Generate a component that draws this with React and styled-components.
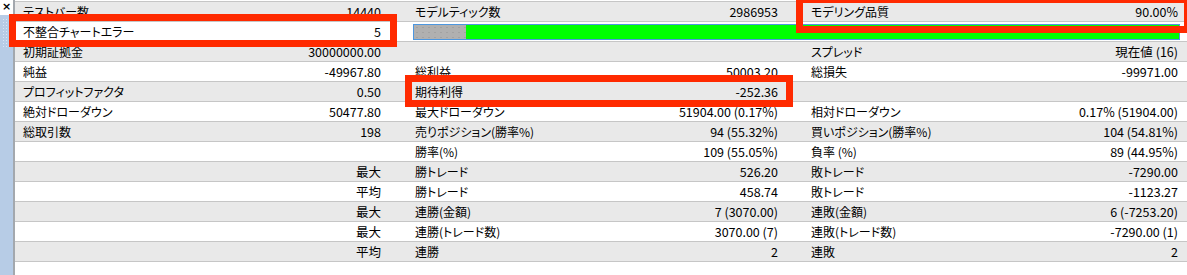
import React from 'react';
import styled, { createGlobalStyle } from 'styled-components';

const GlobalStyle = createGlobalStyle`
  html, body {
    margin: 0;
    padding: 0;
    background: #ffffff;
  }
  body {
    font-family: "Noto Sans CJK JP", "Noto Sans", sans-serif;
    font-size: 12px;
    color: #000;
  }
`;

const Page = styled.div`
  display: flex;
  height: 275px;
  width: 1187px;
  position: relative;
  overflow: hidden;
`;

const Sidebar = styled.div`
  width: 13px;
  border-right: 2px solid #a3a8ae;
  display: flex;
  flex-direction: column;
  background: #b7cce6;
`;

const CloseBox = styled.div`
  height: 15px;
  background: #ffffff;
  font-family: "DejaVu Sans", sans-serif;
  font-weight: bold;
  font-size: 11px;
  line-height: 13px;
  text-align: center;
`;

const Gripper = styled.div`
  margin: 3px 0 0 2px;
  width: 5px;
  height: 30px;
  background-image: radial-gradient(circle, #dbe6f4 0.8px, transparent 1px);
  background-size: 3px 3px;
`;

const Table = styled.div`
  flex: 1;
  margin-top: 1px;
  border-top: 1px solid #c6c6c6;
`;

const Row = styled.div`
  display: grid;
  grid-template-columns: 384px 396px 1fr;
  height: 20px;
  box-sizing: border-box;
  border-bottom: 1px solid #c6c6c6;
  background: ${({ $alt }) => ($alt ? '#e9e9e9' : '#ffffff')};
`;

const pads = [
  { l: 8, r: 18 },
  { l: 16, r: 17 },
  { l: 16, r: 9 },
];

const Cell = styled.div`
  display: flex;
  align-items: center;
  justify-content: space-between;
  padding: 0 ${({ $col }) => pads[$col].r}px 0 ${({ $col }) => pads[$col].l}px;
  white-space: nowrap;
  line-height: 19px;
  font-feature-settings: "palt";
`;

const Value = styled.span`
  font-size: 12.5px;
`;

const ProgressCell = styled.div`
  grid-column: span 2;
  display: flex;
  align-items: center;
  padding: 0 7px 0 14px;
`;

const Progress = styled.div`
  flex: 1;
  height: 16px;
  margin-top: 1px;
  box-sizing: border-box;
  border: 1px solid #4d97e0;
  display: flex;
  background: #00ff00;
`;

const ProgressRest = styled.div`
  width: 52px;
  background-color: #b0b0b0;
  background-image: radial-gradient(circle, #a2a2a2 0.5px, transparent 0.7px);
  background-size: 6px 5px;
`;

const Mark = styled.div`
  position: absolute;
  border: 7px solid #ff2a00;
  box-sizing: border-box;
  left: ${({ $x }) => $x}px;
  top: ${({ $y }) => $y}px;
  width: ${({ $w }) => $w}px;
  height: ${({ $h }) => $h}px;
  pointer-events: none;
`;

const rows = [
  [['テストバー数', '14440'], ['モデルティック数', '2986953'], ['モデリング品質', '90.00%']],
  'progress',
  [['初期証拠金', '30000000.00'], ['', ''], ['スプレッド', '現在値 (16)']],
  [['純益', '-49967.80'], ['総利益', '50003.20'], ['総損失', '-99971.00']],
  [['プロフィットファクタ', '0.50'], ['期待利得', '-252.36'], ['', '']],
  [['絶対ドローダウン', '50477.80'], ['最大ドローダウン', '51904.00 (0.17%)'], ['相対ドローダウン', '0.17% (51904.00)']],
  [['総取引数', '198'], ['売りポジション(勝率%)', '94 (55.32%)'], ['買いポジション(勝率%)', '104 (54.81%)']],
  [['', ''], ['勝率(%)', '109 (55.05%)'], ['負率 (%)', '89 (44.95%)']],
  [['', '最大'], ['勝トレード', '526.20'], ['敗トレード', '-7290.00']],
  [['', '平均'], ['勝トレード', '458.74'], ['敗トレード', '-1123.27']],
  [['', '最大'], ['連勝(金額)', '7 (3070.00)'], ['連敗(金額)', '6 (-7253.20)']],
  [['', '最大'], ['連勝(トレード数)', '3070.00 (7)'], ['連敗(トレード数)', '-7290.00 (1)']],
  [['', '平均'], ['連勝', '2'], ['連敗', '2']],
];

export default function App() {
  return (
    <>
      <GlobalStyle />
      <Page>
        <Sidebar>
          <CloseBox>×</CloseBox>
          <Gripper />
        </Sidebar>
        <Table>
          {rows.map((row, i) =>
            row === 'progress' ? (
              <Row key={i} $alt={i % 2 === 0}>
                <Cell $col={0}>
                  <span>不整合チャートエラー</span>
                  <Value>5</Value>
                </Cell>
                <ProgressCell>
                  <Progress>
                    <ProgressRest />
                  </Progress>
                </ProgressCell>
              </Row>
            ) : (
              <Row key={i} $alt={i % 2 === 0}>
                {row.map(([label, value], c) => (
                  <Cell key={c} $col={c}>
                    <span>{label}</span>
                    <Value>{value}</Value>
                  </Cell>
                ))}
              </Row>
            )
          )}
        </Table>
        <Mark $x={9} $y={14} $w={388} $h={33} />
        <Mark $x={796} $y={-4} $w={395} $h={37} />
        <Mark $x={405} $y={75} $w={388} $h={32} />
      </Page>
    </>
  );
}
